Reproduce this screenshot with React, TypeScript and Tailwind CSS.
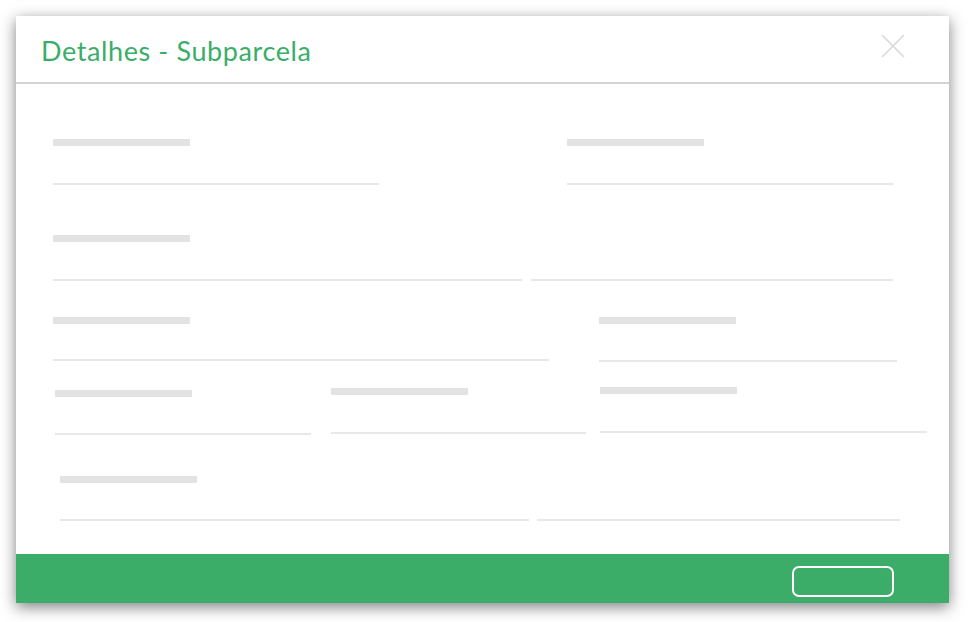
import React from "react";

function Label({ className = "" }: { className?: string }) {
  return <div className={"h-[7px] w-[137px] bg-[#e3e3e3] " + className} />;
}

function Line({ className = "" }: { className?: string }) {
  return <div className={"h-[2px] bg-[#e8e8e8] " + className} />;
}

export default function App() {
  return (
    <div className="w-[968px] h-[622px] bg-white pl-[16px] pt-[16px]">
      <div className="w-[933px] h-[587px] bg-white flex flex-col shadow-[0_4px_14px_rgba(0,0,0,0.5)]">
        {/* Header */}
        <div className="h-[68px] shrink-0 border-b-2 border-[#d4d4d4] flex items-start justify-between pl-[25px] pr-[44px]">
          <h1
            className="mt-[21px] text-[27px] leading-[27px] tracking-[0.6px] text-[#3aae69]"
            style={{ fontFamily: "Lato, 'Open Sans', sans-serif" }}
          >
            Detalhes - Subparcela
          </h1>
          <button className="mt-[18px] w-[24px] h-[24px] text-[#d9d9d9]" aria-label="Fechar">
            <svg width="24" height="24" viewBox="0 0 24 24" fill="none">
              <path d="M1 1 L23 23 M23 1 L1 23" stroke="currentColor" strokeWidth="1.6" />
            </svg>
          </button>
        </div>

        {/* Body */}
        <div className="flex-1 flex flex-col">
          {/* Row 1 */}
          <div className="flex mt-[55px]">
            <div className="ml-[37px] flex flex-col">
              <Label />
              <Line className="mt-[37px] w-[326px]" />
            </div>
            <div className="ml-[188px] flex flex-col">
              <Label />
              <Line className="mt-[37px] w-[327px]" />
            </div>
          </div>

          {/* Row 2 */}
          <div className="flex flex-col mt-[50px] ml-[37px]">
            <Label />
            <div className="flex mt-[37px] gap-[9px]">
              <Line className="w-[469px]" />
              <Line className="w-[362px]" />
            </div>
          </div>

          {/* Row 3 */}
          <div className="flex mt-[36px]">
            <div className="ml-[37px] flex flex-col">
              <Label />
              <Line className="mt-[35px] w-[496px]" />
            </div>
            <div className="ml-[50px] flex flex-col">
              <Label />
              <Line className="mt-[36px] w-[298px]" />
            </div>
          </div>

          {/* Row 4 */}
          <div className="flex items-start mt-[25px]">
            <div className="ml-[39px] mt-[3px] flex flex-col">
              <Label />
              <Line className="mt-[36px] w-[256px]" />
            </div>
            <div className="ml-[20px] mt-[1px] flex flex-col">
              <Label />
              <Line className="mt-[37px] w-[255px]" />
            </div>
            <div className="ml-[14px] flex flex-col">
              <Label />
              <Line className="mt-[37px] w-[327px]" />
            </div>
          </div>

          {/* Row 5 */}
          <div className="flex flex-col mt-[41px] ml-[44px]">
            <Label />
            <div className="flex mt-[36px] gap-[8px]">
              <Line className="w-[469px]" />
              <Line className="w-[363px]" />
            </div>
          </div>
        </div>

        {/* Footer */}
        <div className="h-[49px] shrink-0 bg-[#3bad69] flex justify-end items-start pt-[12px] pr-[55px]">
          <button className="w-[102px] h-[31px] rounded-[7px] border-2 border-white" aria-label="Fechar" />
        </div>
      </div>
    </div>
  );
}
